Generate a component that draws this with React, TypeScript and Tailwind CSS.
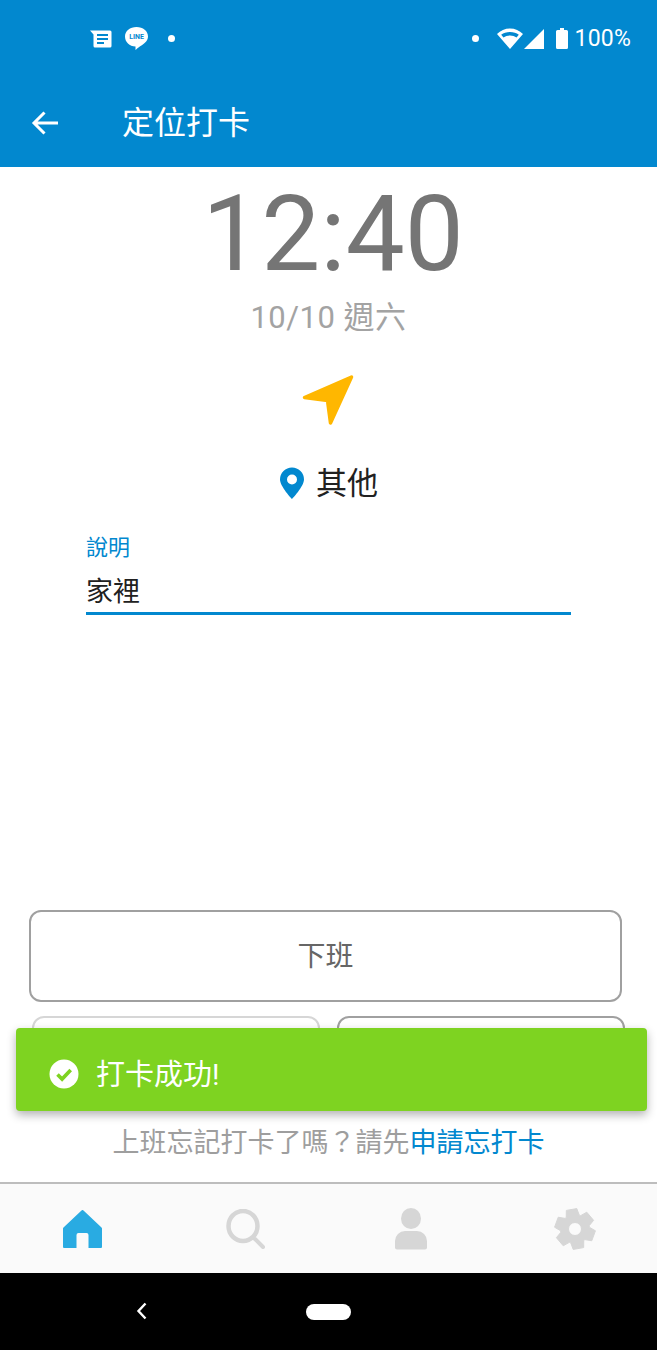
import React from "react";

const sans = { fontFamily: '"Roboto","Noto Sans CJK TC",sans-serif' };

function gearPath(): string {
  const cx = 21;
  const cy = 21;
  const teeth = 6;
  const outer = 20.5;
  const inner = 14.5;
  const start = -100;
  const pts: string[] = [];
  for (let i = 0; i < teeth; i++) {
    const a = start + (i * 360) / teeth;
    const offsets: [number, number][] = [
      [-27, inner],
      [-15, outer],
      [15, outer],
      [27, inner],
    ];
    for (const [o, r] of offsets) {
      const rad = ((a + o) * Math.PI) / 180;
      pts.push(`${(cx + r * Math.cos(rad)).toFixed(2)} ${(cy + r * Math.sin(rad)).toFixed(2)}`);
    }
  }
  return `M${pts.join("L")}Z`;
}

function Toast() {
  return (
    <div className="absolute left-[16px] top-[1028px] flex h-[83px] w-[631px] items-center rounded-[4px] bg-[#7ed321] pl-[33px] pt-[8px] shadow-[0_4px_10px_rgba(0,0,0,0.3)]">
      <svg width="30" height="30" viewBox="0 0 30 30">
        <circle cx="15" cy="15" r="14.5" fill="#fff" />
        <path d="M8.5 15.5l4.6 4.6 8.6-9" fill="none" stroke="#7ed321" strokeWidth="3.6" />
      </svg>
      <span className="ml-[17px] mt-[3px] text-[29px] leading-none text-white">打卡成功!</span>
    </div>
  );
}

export default function App() {
  return (
    <div className="relative flex h-[1350px] w-[657px] flex-col overflow-hidden bg-white antialiased" style={sans}>
      <div className="h-[167px] shrink-0 bg-[#0288cf]">
        <div className="flex h-[77px] items-center pl-[90px] pr-[26px] text-white">
          <svg width="22" height="18" viewBox="0 0 22 18" className="mr-[13px]">
            <path d="M0 .5h20a1.5 1.5 0 0 1 1.5 1.5v14a1.5 1.5 0 0 1-1.5 1.5H5a1.5 1.5 0 0 1-1.5-1.5V4.500z" fill="#fff" />
            <path d="M7 5h11M7 9h11M7 13h7" stroke="#0288cf" strokeWidth="2" />
          </svg>
          <div className="relative mr-[20px] h-[24px] w-[23px]">
            <svg width="23" height="24" viewBox="0 0 23 24" className="absolute left-0 top-0">
              <path d="M11.500 0C18 0 23 4 23 9.500c0 5-5 8-9.500 11-1 .7-2.200 2-3 2.500v-3.500C4.500 19.500 0 15 0 9.500 0 4 5 0 11.500 0z" fill="#fff" />
            </svg>
            <span className="absolute left-0 top-[6px] w-[23px] text-center text-[7px] font-bold leading-[8px] text-[#0288cf]">LINE</span>
          </div>
          <div className="h-[7px] w-[7px] rounded-full bg-white" />
          <div className="ml-auto h-[7px] w-[7px] rounded-full bg-white" />
          <svg width="26" height="21" viewBox="0 0 26 21" className="ml-[18px]">
            <path fillRule="evenodd" d="M13 21L0 6C3.500 2.500 8 .5 13 .5S22.500 2.500 26 6zM13 4C9.500 4 6.500 5 4.200 6.800l2.300 2.700C8.300 8.200 10.500 7.500 13 7.500s4.700.7 6.500 2l2.300-2.700C19.500 5 16.500 4 13 4z" fill="#fff" />
          </svg>
          <svg width="20" height="20" viewBox="0 0 20 20" className="ml-[1px]">
            <path d="M20 0v20H0z" fill="#fff" />
          </svg>
          <svg width="12" height="21" viewBox="0 0 12 21" className="ml-[12px]">
            <path d="M4 0h4v2h2.500A1.500 1.500 0 0 1 12 3.500V19.500a1.500 1.500 0 0 1-1.500 1.500h-9A1.500 1.500 0 0 1 0 19.500V3.500A1.500 1.500 0 0 1 1.500 2H4z" fill="#fff" />
          </svg>
          <span className="ml-[7px] text-[23px] leading-none tracking-[0.2px]">100%</span>
        </div>
        <div className="flex h-[90px] items-center pl-[31px] pt-[1px] text-white">
          <svg width="28" height="26" viewBox="0 0 28 26">
            <path d="M27 13H3M13.500 2.500L3 13l10.500 10.500" fill="none" stroke="#fff" strokeWidth="3" />
          </svg>
          <span className="ml-[63px] text-[32px] leading-none">定位打卡</span>
        </div>
      </div>

      <div className="flex min-h-0 flex-1 flex-col items-center">
        <div className="ml-[9px] mt-[16px] h-[104px] text-[105px] leading-[104px] text-[#757575]">12:40</div>
        <div className="mt-[11px] text-[31px] leading-[40px] tracking-[0.5px] text-[#a3a3a3]">10/10 週六</div>
        <svg width="56" height="56" viewBox="0 0 56 56" className="mt-[34px]">
          <path d="M3 25L50 4.500l-21 46-3-22.500z" fill="#ffb700" stroke="#ffb700" strokeWidth="3.500" strokeLinejoin="round" transform="translate(.5 .5)" />
        </svg>
        <div className="mt-[39px] flex h-[32px] items-center">
          <svg width="26" height="32" viewBox="0 0 26 32">
            <path fillRule="evenodd" d="M13 32C13 32 1 19.500 1 12.500a12 12 0 0 1 24 0C25 19.500 13 32 13 32zM13 7.500a5 5 0 1 0 0 10 5 5 0 0 0 0-10z" fill="#0288cf" />
          </svg>
          <span className="ml-[11px] text-[31px] leading-none text-[#212121]">其他</span>
        </div>
        <div className="ml-[86px] mt-[35px] w-[485px] self-start">
          <div className="text-[22px] leading-[28px] text-[#0288cf]">說明</div>
          <div className="mt-[13px] h-[40px] border-b-[3px] border-[#0288cf] text-[27px] leading-[34px] text-[#212121]">家裡</div>
        </div>

        <div className="ml-[-3px] mr-[3px] mt-auto flex h-[92px] w-[593px] items-center justify-center rounded-[12px] border-2 border-[#a0a0a0] pt-[1px] text-[28px] text-[#666666]">下班</div>
        <div className="mt-[14px] flex w-[593px] justify-between">
          <div className="h-[92px] w-[288px] rounded-[12px] border-2 border-[#d6d6d6]" />
          <div className="h-[92px] w-[288px] rounded-[12px] border-2 border-[#a0a0a0]" />
        </div>
        <div className="mb-[21px] mt-[17px] text-[27px] leading-[36px] text-[#9e9e9e]">
          上班忘記打卡了嗎？請先<span className="text-[#0288cf]">申請忘打卡</span>
        </div>
      </div>

      <div className="flex h-[91px] shrink-0 items-center justify-around border-t-2 border-[#bdbdbd] bg-[#fafafa]">
        <div className="flex w-[164px] justify-center">
          <svg width="39" height="38" viewBox="0 0 39 38">
            <path d="M18.500.500a1.400 1.400 0 0 1 2 0L38.500 17.500a1.500 1.500 0 0 1 .5 1V37a1 1 0 0 1-1 1H25.500V25a2 2 0 0 0-2-2h-8a2 2 0 0 0-2 2v13H1a1 1 0 0 1-1-1V18.500a1.500 1.500 0 0 1 .5-1z" fill="#29abe2" />
          </svg>
        </div>
        <div className="flex w-[164px] justify-center">
          <svg width="40" height="40" viewBox="0 0 40 40">
            <ellipse cx="17" cy="17" rx="14.500" ry="15" fill="none" stroke="#d6d6d6" strokeWidth="4.500" />
            <path d="M29 30l8 8" stroke="#d6d6d6" strokeWidth="4" strokeLinecap="round" />
          </svg>
        </div>
        <div className="flex w-[164px] justify-center">
          <svg width="34" height="42" viewBox="0 0 34 42">
            <ellipse cx="17" cy="10.500" rx="10" ry="10.500" fill="#d6d6d6" />
            <path d="M11 23h12a10 10 0 0 1 10 10v6.500a2 2 0 0 1-2 2H3a2 2 0 0 1-2-2V33a10 10 0 0 1 10-10z" fill="#d6d6d6" />
          </svg>
        </div>
        <div className="flex w-[164px] justify-center">
          <svg width="42" height="42" viewBox="0 0 42 42">
            <path fillRule="evenodd" fill="#d6d6d6" stroke="#d6d6d6" strokeWidth="1" strokeLinejoin="round" d={`${gearPath()}M21 14.500a6.500 6.500 0 1 0 0 13 6.500 6.500 0 0 0 0-13z`} />
          </svg>
        </div>
      </div>

      <div className="relative flex h-[77px] shrink-0 items-center justify-center bg-black">
        <div className="h-[16px] w-[45px] rounded-full bg-white" />
        <svg width="12" height="18" viewBox="0 0 12 18" className="absolute left-[136px] top-[29px]">
          <path d="M9.500 1.500L2.500 9l7 7.500" fill="none" stroke="#fff" strokeWidth="2.400" />
        </svg>
      </div>

      <Toast />
    </div>
  );
}
